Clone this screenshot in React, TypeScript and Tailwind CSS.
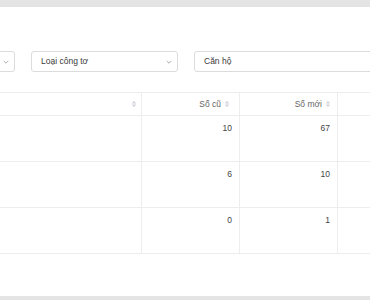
import React from "react";

const Chevron = () => (
  <svg width="8" height="8" viewBox="0 0 10 10" fill="none">
    <path d="M2.5 4 L5 6.5 L7.5 4" stroke="#9a9a9a" strokeWidth="1" strokeLinecap="round" strokeLinejoin="round" />
  </svg>
);

const Sort = () => (
  <svg width="6" height="8" viewBox="0 0 6 8" className="ml-[3px]">
    <path d="M3 0.8 L5.3 3.4 L0.7 3.4 Z" fill="#d4d4dc" />
    <path d="M3 7.2 L5.3 4.6 L0.7 4.6 Z" fill="#d4d4dc" />
  </svg>
);

const rows = [
  { a: "10", b: "67" },
  { a: "6", b: "10" },
  { a: "0", b: "1" },
];

export default function App() {
  return (
    <div className="w-[370px] h-[300px] overflow-hidden bg-white flex flex-col" style={{ fontFamily: '"Liberation Sans", Arial, sans-serif' }}>
      <div className="h-[7px] bg-[#e4e4e4] shrink-0" />
      <div className="flex-1 flex flex-col overflow-hidden">
        <div className="flex gap-[16px] mt-[44px] ml-[-132px] shrink-0">
          <div className="w-[147px] h-[21px] shrink-0 border border-[#dcdcdc] rounded-[3px] flex items-center justify-end pr-[4px]">
            <Chevron />
          </div>
          <div className="w-[147px] h-[21px] shrink-0 border border-[#dcdcdc] rounded-[3px] flex items-center justify-between pl-[9px] pr-[4px] text-[8.5px] text-[#3a3a3a]">
            <span>Loại công tơ</span>
            <Chevron />
          </div>
          <div className="w-[200px] h-[21px] shrink-0 border border-[#dcdcdc] rounded-[3px] flex items-center pl-[9px] text-[8.5px] text-[#3a3a3a]">
            <span>Căn hộ</span>
          </div>
        </div>
        <div className="mt-[20px] shrink-0 text-[8.5px]">
          <div className="flex h-[24px] border-t border-b border-[#ededf0] text-[#666]">
            <div className="w-[142px] shrink-0 border-r border-[#ededf0] flex items-center justify-end pr-[4px]">
              <Sort />
            </div>
            <div className="w-[98px] shrink-0 border-r border-[#ededf0] flex items-center justify-end pr-[9px]">
              <span>Số cũ</span>
              <Sort />
            </div>
            <div className="w-[98px] shrink-0 border-r border-[#ededf0] flex items-center justify-end pr-[6px]">
              <span>Số mới</span>
              <Sort />
            </div>
            <div className="flex-1" />
          </div>
          {rows.map((r, i) => (
            <div key={i} className="flex h-[46px] border-b border-[#ededf0] text-[#444]">
              <div className="w-[142px] shrink-0 border-r border-[#ededf0]" />
              <div className="w-[98px] shrink-0 border-r border-[#ededf0] flex justify-end pr-[7px] pt-[6px]">
                <span>{r.a}</span>
              </div>
              <div className="w-[98px] shrink-0 border-r border-[#ededf0] flex justify-end pr-[7px] pt-[6px]">
                <span>{r.b}</span>
              </div>
              <div className="flex-1" />
            </div>
          ))}
        </div>
      </div>
      <div className="h-[4px] bg-[#e4e4e4] shrink-0" />
    </div>
  );
}
